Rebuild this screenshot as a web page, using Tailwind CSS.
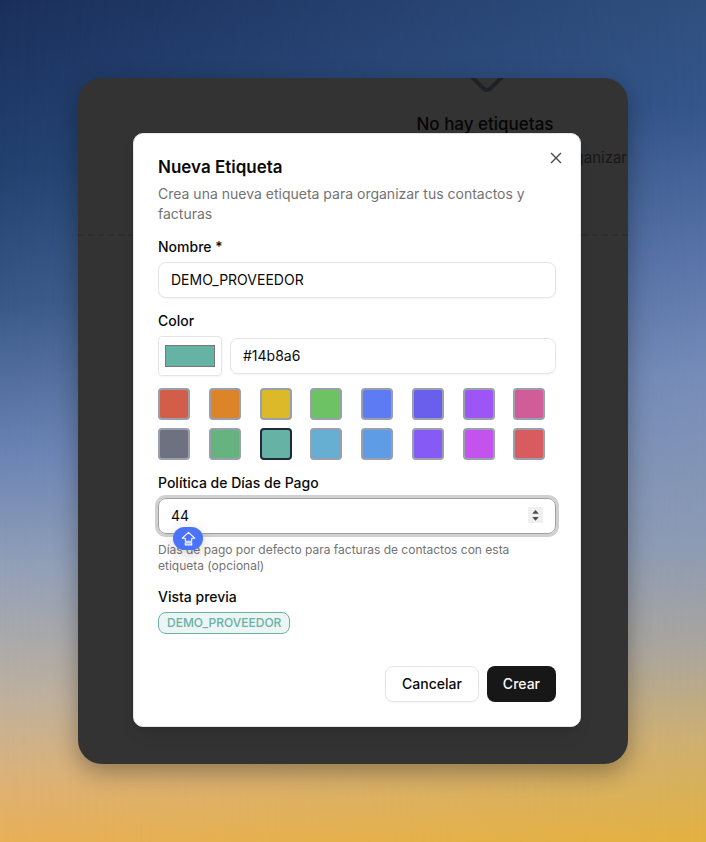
<!DOCTYPE html>
<html lang="es">
<head>
    <meta charset="UTF-8">
    <meta name="viewport" content="width=device-width, initial-scale=1.0">
    <title>Nueva Etiqueta</title>
    <script src="https://cdn.jsdelivr.net/npm/@tailwindcss/browser@4"></script>
</head>
<body class="relative isolate min-h-screen p-[78px] font-['Inter',sans-serif] text-sm text-[#0a0a0a]">
    <!-- Fondo degradado -->
    <div class="absolute inset-0 -z-20 bg-[linear-gradient(to_bottom,#1b2f5c_0%,#22416f_20%,#395888_36%,#6b84b5_54%,#94a1b8_68%,#bfb19f_83%,#dcb27a_92%,#e9b057_100%)]"></div>
    <div class="absolute inset-0 -z-10 bg-[linear-gradient(to_bottom,#2f507f_0%,#35568b_13%,#5873a8_30%,#778db9_45%,#8d9bb3_65%,#aaa59d_77%,#ceaf70_88%,#e3b140_100%)] mask-[linear-gradient(to_right,transparent,black)]"></div>

    <main class="relative overflow-hidden rounded-3xl bg-[#333333] pt-[55px] pr-[47px] pb-[37px] pl-[55px] shadow-[0_8px_24px_rgba(0,0,0,0.32)]">
        <!-- Estado vacío detrás del modal -->
        <div class="absolute inset-x-0 top-0 h-[158px] border-b-2 border-dashed border-[#2d2d2d] pl-[264px] text-center whitespace-nowrap">
            <svg class="mx-auto h-8 w-10" viewBox="0 0 40 32" fill="none" stroke="#1f2125" stroke-width="4" stroke-linejoin="round" aria-hidden="true">
                <path d="M5 -3 L18 10 Q22 14 26 10 L39 -3" />
            </svg>
            <h2 class="text-[17px] leading-7 font-medium text-[#050505]">No hay etiquetas</h2>
            <p class="mt-2 pr-px text-right text-[15px] leading-6 text-[#171717]">Crea una etiqueta para organizar</p>
        </div>

        <div role="dialog" aria-labelledby="titulo" class="relative grid gap-4 rounded-[10px] border border-[#e5e5e5] bg-white p-6 shadow-lg">
            <header class="flex flex-col gap-2">
                <h1 id="titulo" class="text-[17px] leading-[18px] font-semibold">Nueva Etiqueta</h1>
                <p class="text-[#737373]">Crea una nueva etiqueta para organizar tus contactos y facturas</p>
            </header>
            <button type="button" aria-label="Cerrar" class="absolute top-4 right-4 text-[#4a4a4a]">
                <svg class="size-4" viewBox="0 0 24 24" fill="none" stroke="currentColor" stroke-width="2" stroke-linecap="round">
                    <path d="M19 5 5 19M5 5l14 14" />
                </svg>
            </button>

            <form class="grid gap-4">
                <div class="grid gap-2">
                    <label for="nombre" class="leading-[14px] font-medium">Nombre *</label>
                    <input id="nombre" type="text" value="DEMO_PROVEEDOR" class="h-9 w-full rounded-lg border border-[#e5e5e5] px-3 pb-0.5 shadow-xs outline-none">
                </div>

                <div class="grid gap-2">
                    <label for="hex" class="leading-[14px] font-medium">Color</label>
                    <div class="flex items-center gap-2">
                        <input id="color" type="color" value="#66b2a5" aria-label="Elegir color" class="h-10 w-16 rounded-sm border border-[#e5e5e5] p-1 shadow-xs">
                        <input id="hex" type="text" value="#14b8a6" class="h-9 min-w-0 flex-1 rounded-lg border border-[#e5e5e5] px-3 pb-0.5 shadow-xs outline-none">
                    </div>
                    <div class="mt-1 grid grid-cols-8 gap-2">
                        <button type="button" aria-label="Rojo" class="size-8 rounded-sm border-2 border-[#9a9fae] bg-[#d25e4a]"></button>
                        <button type="button" aria-label="Naranja" class="size-8 rounded-sm border-2 border-[#9a9fae] bg-[#dd8428]"></button>
                        <button type="button" aria-label="Amarillo" class="size-8 rounded-sm border-2 border-[#9a9fae] bg-[#dbb928]"></button>
                        <button type="button" aria-label="Verde" class="size-8 rounded-sm border-2 border-[#9a9fae] bg-[#6dc264]"></button>
                        <button type="button" aria-label="Azul" class="size-8 rounded-sm border-2 border-[#9a9fae] bg-[#5d7bf2]"></button>
                        <button type="button" aria-label="Índigo" class="size-8 rounded-sm border-2 border-[#9a9fae] bg-[#6a5fec]"></button>
                        <button type="button" aria-label="Púrpura" class="size-8 rounded-sm border-2 border-[#9a9fae] bg-[#9d56f5]"></button>
                        <button type="button" aria-label="Rosa" class="size-8 rounded-sm border-2 border-[#9a9fae] bg-[#d15d98]"></button>
                        <button type="button" aria-label="Gris" class="size-8 rounded-sm border-2 border-[#9a9fae] bg-[#6e7280]"></button>
                        <button type="button" aria-label="Esmeralda" class="size-8 rounded-sm border-2 border-[#9a9fae] bg-[#66b380]"></button>
                        <button type="button" aria-label="Turquesa" aria-pressed="true" class="size-8 rounded-sm border-2 border-[#1f2937] bg-[#66b2a5]"></button>
                        <button type="button" aria-label="Cian" class="size-8 rounded-sm border-2 border-[#9a9fae] bg-[#66afd3]"></button>
                        <button type="button" aria-label="Celeste" class="size-8 rounded-sm border-2 border-[#9a9fae] bg-[#5f9ce6]"></button>
                        <button type="button" aria-label="Violeta" class="size-8 rounded-sm border-2 border-[#9a9fae] bg-[#865af5]"></button>
                        <button type="button" aria-label="Fucsia" class="size-8 rounded-sm border-2 border-[#9a9fae] bg-[#c452ee]"></button>
                        <button type="button" aria-label="Coral" class="size-8 rounded-sm border-2 border-[#9a9fae] bg-[#d85b60]"></button>
                    </div>
                </div>

                <div class="grid gap-2">
                    <label for="dias" class="leading-[14px] font-medium">Política de Días de Pago</label>
                    <div class="relative">
                        <input id="dias" type="number" value="44" class="h-9 w-full rounded-lg border border-[#a1a1a1] px-3 pb-0.5 ring-3 ring-[#d0d0d0] outline-none">
                        <!-- Flechas del campo numérico -->
                        <svg class="pointer-events-none absolute top-[9px] right-[13px] h-4 w-[15px] bg-[#f0f0f0]" viewBox="0 0 15 16" fill="#4d4d4d" aria-hidden="true">
                            <path d="M4.2 6.8 7.5 3 10.8 6.8ZM4.2 10 7.5 13.8 10.8 10Z" />
                        </svg>
                        <!-- Indicador de bloqueo de mayúsculas -->
                        <span class="absolute top-[29px] left-[15px] flex h-[23px] w-[30px] items-center justify-center rounded-full bg-[#4a72fb] shadow-[0_4px_14px_rgba(0,0,0,0.18)]">
                            <svg class="size-4" viewBox="0 0 16 16" fill="none" stroke="white" stroke-width="1.1" stroke-linejoin="round" aria-hidden="true">
                                <path d="M8.5 1.3 2.3 7.2H5.3V10.3H11.7V7.2H14.7Z" />
                                <rect x="5.3" y="11.9" width="6.4" height="2" />
                            </svg>
                        </span>
                    </div>
                    <p class="text-xs text-[#737373]">Días de pago por defecto para facturas de contactos con esta etiqueta (opcional)</p>
                </div>

                <div class="grid justify-items-start gap-2">
                    <h2 class="leading-[14px] font-medium">Vista previa</h2>
                    <span class="rounded-lg border border-[#66b2a5] bg-[#edf5f4] px-2 py-0.5 text-xs font-medium text-[#66b2a5]">DEMO_PROVEEDOR</span>
                </div>

                <footer class="flex justify-end gap-2 pt-4">
                    <button type="button" class="h-9 rounded-lg border border-[#e5e5e5] px-4 font-medium shadow-xs">Cancelar</button>
                    <button type="submit" class="h-9 rounded-lg bg-[#171717] px-4 font-medium text-[#fafafa]">Crear</button>
                </footer>
            </form>
        </div>
    </main>
</body>
</html>
